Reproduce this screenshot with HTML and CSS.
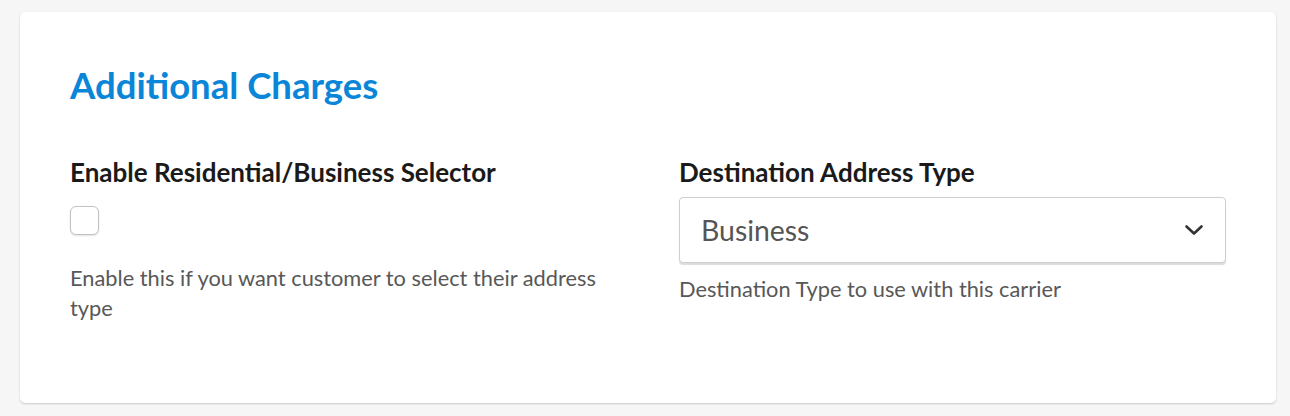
FILE: index.html
```html
<!DOCTYPE html>
<html lang="en">
<head>
<meta charset="utf-8">
<title>Additional Charges</title>
<link rel="stylesheet" href="styles.css">
</head>
<body>
<div class="card">
  <h2 class="title">Additional Charges</h2>
  <div class="fields">
    <div class="field">
      <label class="label">Enable Residential/Business Selector</label>
      <span class="checkbox"></span>
      <p class="help help-check">Enable this if you want customer to select their address type</p>
    </div>
    <div class="field">
      <label class="label">Destination Address Type</label>
      <div class="select">
        <span class="select-value">Business</span>
        <svg class="chevron" width="20" height="12" viewBox="0 0 20 12"><path d="M2.5 2.5 L10 9.5 L17.5 2.5" fill="none" stroke="#333" stroke-width="2.6" stroke-linecap="round" stroke-linejoin="round"/></svg>
      </div>
      <p class="help help-select">Destination Type to use with this carrier</p>
    </div>
  </div>
</div>
</body>
</html>
```

FILE: styles.css
```css
html, body {
  margin: 0;
  padding: 0;
}
body {
  background: #f6f6f6;
  font-family: Lato, "Open Sans", sans-serif;
  width: 1290px;
  height: 416px;
  overflow: hidden;
}
.card {
  box-sizing: border-box;
  margin: 12px 14px 0 20px;
  height: 391px;
  background: #fff;
  border-radius: 5px;
  box-shadow: 0 1px 2px rgba(0, 0, 0, 0.18), 0 0 1px rgba(0, 0, 0, 0.06);
  padding: 51px 50px 0 50px;
}
.title {
  margin: 0;
  font-size: 36.5px;
  line-height: 44px;
  font-weight: 700;
  color: #0a86d8;
}
.fields {
  display: grid;
  grid-template-columns: 1fr 1fr;
  column-gap: 62px;
  margin-top: 49px;
}
.field {
  display: flex;
  flex-direction: column;
  align-items: flex-start;
}
.label {
  font-size: 26px;
  line-height: 32px;
  font-weight: 700;
  color: #1a1a1a;
}
.checkbox {
  box-sizing: border-box;
  display: block;
  width: 29px;
  height: 29px;
  margin-top: 18px;
  border: 1px solid #c2c2c2;
  border-radius: 6px;
  background: #fff;
  box-shadow: 0 1px 2px rgba(0, 0, 0, 0.12);
}
.help {
  margin: 0;
  font-size: 21.8px;
  line-height: 30px;
  color: #585858;
}
.help-check {
  margin-top: 28px;
}
.select {
  box-sizing: border-box;
  align-self: stretch;
  display: flex;
  align-items: center;
  justify-content: space-between;
  height: 66px;
  margin-top: 9px;
  padding: 0 21px 0 21px;
  border: 1px solid #cfcfcf;
  border-radius: 4px;
  background: #fff;
  box-shadow: 0 2px 1px rgba(0, 0, 0, 0.14);
}
.select-value {
  font-size: 28.4px;
  color: #555;
}
.chevron {
  display: block;
}
.help-select {
  margin-top: 11px;
}
```
